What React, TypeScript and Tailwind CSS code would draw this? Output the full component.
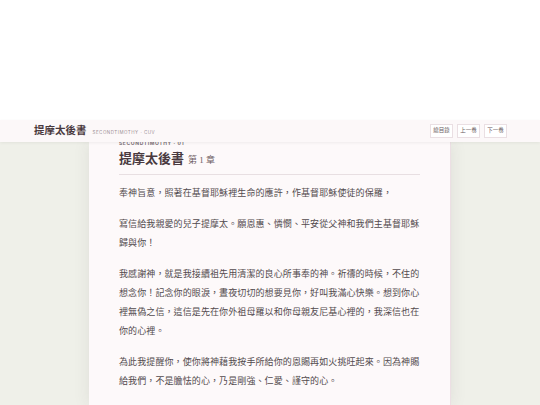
import React from "react";

const serif = {
  fontFamily: '"Liberation Serif", "Noto Sans CJK TC", serif',
};

const paragraphs = [
  "奉神旨意，照著在基督耶穌裡生命的應許，作基督耶穌使徒的保羅，",
  "寫信給我親愛的兒子提摩太。願恩惠、憐憫、平安從父神和我們主基督耶穌歸與你！",
  "我感謝神，就是我接續祖先用清潔的良心所事奉的神。祈禱的時候，不住的想念你！記念你的眼淚，晝夜切切的想要見你，好叫我滿心快樂。想到你心裡無偽之信，這信是先在你外祖母羅以和你母親友尼基心裡的，我深信也在你的心裡。",
  "為此我提醒你，使你將神藉我按手所給你的恩賜再如火挑旺起來。因為神賜給我們，不是膽怯的心，乃是剛強、仁愛、謹守的心。",
];

function NavButton({ label }: { label: string }) {
  return (
    <button className="h-[14px] w-[23px] border border-[#eadfe3] bg-white text-[5.5px] text-[#6b5b61] leading-none">
      {label}
    </button>
  );
}

export default function App() {
  return (
    <div className="w-[540px] h-[405px] overflow-hidden bg-white" style={serif}>
      <div className="h-[120px] bg-white" />

      <header className="relative z-10 h-[22px] flex items-center justify-between pl-[34px] pr-[33px] bg-[#fcf8f9] shadow-[0_1px_3px_rgba(0,0,0,0.06)]">
        <div className="flex items-baseline gap-[6px]">
          <span className="text-[10.5px] font-bold text-[#4a3a40] leading-none">提摩太後書</span>
          <span className="text-[4.5px] tracking-[0.5px] text-[#9c9095] leading-none" style={{ fontFamily: '"Inter", "Liberation Sans", sans-serif' }}>
            SECONDTIMOTHY · CUV
          </span>
        </div>
        <div className="flex gap-[4px]">
          <NavButton label="總目錄" />
          <NavButton label="上一卷" />
          <NavButton label="下一卷" />
        </div>
      </header>

      <main className="h-[263px] overflow-hidden flex justify-center bg-[#eff0e9]">
        <article className="w-[362px] bg-[#fdf9fa] border-r border-[#ecdfe4] shadow-[0_0_16px_rgba(60,40,50,0.09)] px-[30px]">
          <div
            className="-mt-[3px] h-[8px] leading-[8px] text-[5px] font-bold tracking-[0.6px] text-[#7c7176]"
            style={{ fontFamily: '"Inter", "Liberation Sans", sans-serif' }}
          >
            SECONDTIMOTHY · 01
          </div>
          <h1 className="mt-[4px] h-[16px] leading-[16px] flex items-baseline gap-[4px] text-[#4a3a40]">
            <span className="text-[13px] font-bold">提摩太後書</span>
            <span className="text-[9px] text-[#6e5e64]">第 1 章</span>
          </h1>
          <div className="mt-[7px] border-t border-[#e8dfe2]" />
          <div className="pt-[9px] flex flex-col gap-[12px]">
            {paragraphs.map((p, i) => (
              <p key={i} className="text-[9px] tracking-[0.1px] leading-[19px] text-[#524a4d]">
                {p}
              </p>
            ))}
          </div>
        </article>
      </main>
    </div>
  );
}
